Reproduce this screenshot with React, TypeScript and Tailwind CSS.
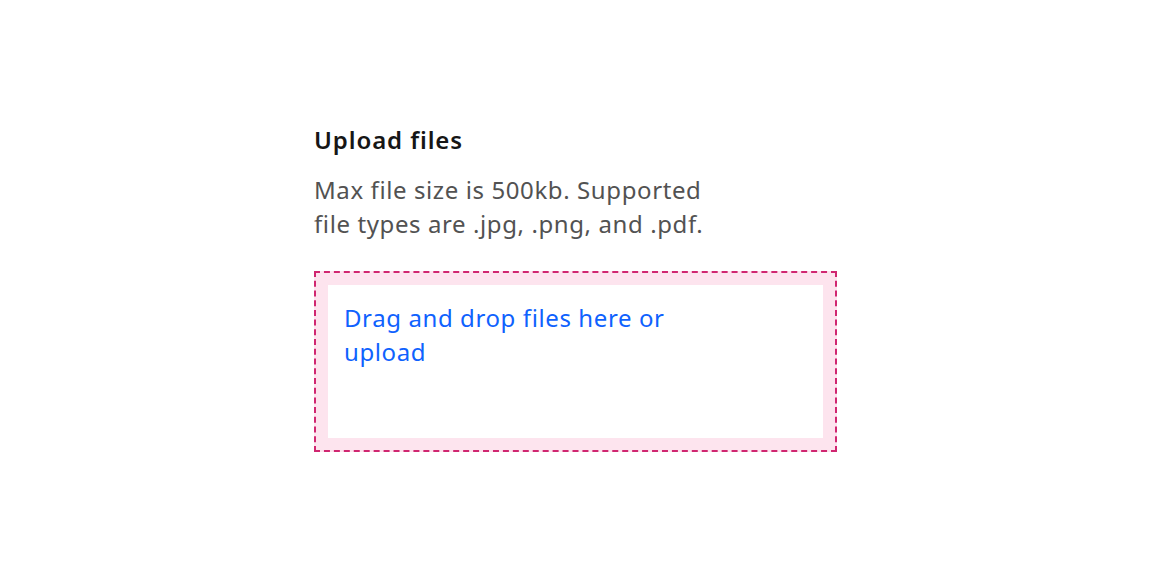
export default function App() {
  return (
    <div
      className="flex h-screen w-full items-center justify-center bg-white pr-[1px]"
      style={{ fontFamily: '"Noto Sans", "Open Sans", sans-serif' }}
    >
      <div className="flex w-[523px] flex-col">
        <h2 className="text-[24px] font-semibold leading-[30px] tracking-[0.9px] text-[#161616]">
          Upload files
        </h2>

        <p className="mt-[18px] w-[405px] text-[24px] leading-[34px] tracking-[0.6px] text-[#525252]">
          Max file size is 500kb. Supported file types are .jpg, .png, and .pdf.
        </p>

        <div className="mt-[30px] border-2 border-dashed border-[#d02670] bg-[#fde4ee] p-[12px]">
          <div className="h-[153px] bg-white px-[16px] pt-[16px]">
            <p className="max-w-[360px] text-[24px] leading-[34px] tracking-[0.6px] text-[#0f62fe]">
              Drag and drop files here or upload
            </p>
          </div>
        </div>
      </div>
    </div>
  )
}
